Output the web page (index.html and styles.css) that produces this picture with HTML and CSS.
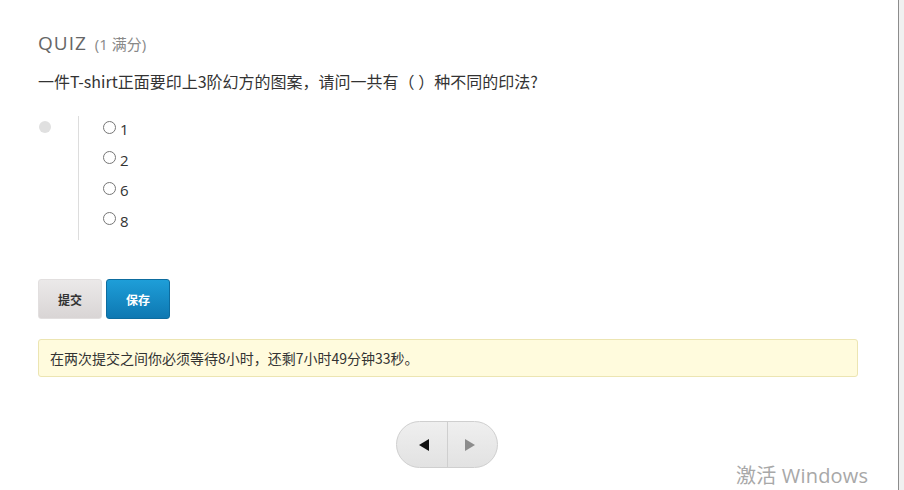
FILE: index.html
```html
<!DOCTYPE html>
<html lang="zh-CN">
<head>
<meta charset="utf-8">
<link rel="stylesheet" href="styles.css">
</head>
<body>
<div class="frame">
  <main class="page">
    <h2 class="title">QUIZ <span class="points">(1 满分)</span></h2>
    <p class="question">一件T-shirt正面要印上3阶幻方的图案，请问一共有（ ）种不同的印法?</p>
    <div class="answer">
      <div class="status"><span class="dot"></span></div>
      <ul class="choices">
        <li><label><input type="radio" name="q"><span>1</span></label></li>
        <li><label><input type="radio" name="q"><span>2</span></label></li>
        <li><label><input type="radio" name="q"><span>6</span></label></li>
        <li><label><input type="radio" name="q"><span>8</span></label></li>
      </ul>
    </div>
    <div class="actions">
      <button class="btn btn-submit">提交</button>
      <button class="btn btn-save">保存</button>
    </div>
    <div class="notice">在两次提交之间你必须等待8小时，还剩7小时49分钟33秒。</div>
    <div class="pager">
      <button class="pg prev" aria-label="上一个"><span class="tri-left"></span></button>
      <button class="pg next" aria-label="下一个"><span class="tri-right"></span></button>
    </div>
    <div class="watermark">激活 Windows</div>
  </main>
  <div class="scroll-edge"></div>
</div>
</body>
</html>
```
FILE: styles.css
```css
html, body {
  margin: 0;
  padding: 0;
  background: #fff;
}
body {
  font-family: "Open Sans", "Noto Sans CJK SC", sans-serif;
  color: #333;
  width: 904px;
  height: 490px;
  overflow: hidden;
}
.frame {
  display: flex;
  height: 490px;
}
.page {
  flex: 1;
  padding: 30px 0 0 38px;
  box-sizing: border-box;
  position: relative;
}
.scroll-edge {
  width: 5px;
  border-left: 1px solid #8c8c8c;
  background: #f0f0f0;
}
.title {
  margin: 0;
  font-weight: 400;
  font-size: 19px;
  letter-spacing: 1px;
  color: #666;
  line-height: 26px;
}
.points {
  font-size: 15px;
  letter-spacing: 0;
  color: #888;
  margin-left: 2px;
}
.question {
  margin: 12px 0 0 0;
  font-size: 16px;
  line-height: 24px;
  color: #333;
  font-family: "Noto Sans CJK SC", "Open Sans", sans-serif;
}
.answer {
  display: flex;
  margin-top: 23px;
}
.status {
  width: 40px;
  padding-top: 5px;
}
.dot {
  display: block;
  width: 12px;
  height: 12px;
  border-radius: 50%;
  background: #e0e0e0;
  margin-left: 1px;
}
.choices {
  list-style: none;
  margin: 0;
  padding: 0 0 0 24px;
  border-left: 1px solid #ddd;
  height: 124px;
}
.choices li {
  height: 30.5px;
}
.choices label {
  display: flex;
  align-items: center;
  font-size: 15px;
  color: #333;
  padding-top: 3px;
}
.choices input {
  margin: 0 4px 4px 0;
  width: 13px;
  height: 13px;
}
.actions {
  display: flex;
  gap: 4px;
  margin-top: 39px;
}
.btn {
  width: 64px;
  height: 40px;
  border-radius: 3px;
  font-family: "Noto Sans CJK SC", sans-serif;
  font-size: 12px;
  font-weight: 700;
  padding: 0;
}
.btn-submit {
  background: linear-gradient(#ebe9e9, #d9d5d5);
  border: 1px solid #e2dfdf;
  color: #333;
}
.btn-save {
  background: linear-gradient(#1e9ed8, #0e78b2);
  border: 1px solid #0d6c9f;
  color: #fff;
}
.notice {
  margin-top: 20px;
  width: 820px;
  box-sizing: border-box;
  height: 38px;
  padding: 0 11px;
  line-height: 36px;
  background: #fffbdd;
  border: 1px solid #ece5b2;
  border-radius: 3px;
  font-family: "Noto Sans CJK SC", sans-serif;
  font-size: 14px;
  color: #333;
}
.pager {
  display: flex;
  margin: 44px 0 0 358px;
  width: 102px;
  height: 47px;
  border: 1px solid #cfcfcf;
  border-radius: 24px;
  overflow: hidden;
  box-sizing: border-box;
  background: linear-gradient(#efefef, #e2e2e2);
}
.pg {
  flex: 1;
  border: 0;
  background: transparent;
  display: flex;
  align-items: center;
  justify-content: center;
  padding: 0;
}
.pg.prev {
  border-right: 1px solid #cfcfcf;
  padding-left: 4px;
}
.pg.next {
  padding-right: 4px;
}
.tri-left {
  width: 0;
  height: 0;
  border-top: 6px solid transparent;
  border-bottom: 6px solid transparent;
  border-right: 10px solid #111;
}
.tri-right {
  width: 0;
  height: 0;
  border-top: 6px solid transparent;
  border-bottom: 6px solid transparent;
  border-left: 10px solid #8c8c8c;
}
.watermark {
  position: absolute;
  left: 736px;
  top: 466px;
  font-family: "Open Sans", "Noto Sans CJK SC", sans-serif;
  font-size: 20px;
  color: #a8a8a8;
  line-height: 20px;
  white-space: nowrap;
  letter-spacing: 0.2px;
}
```
